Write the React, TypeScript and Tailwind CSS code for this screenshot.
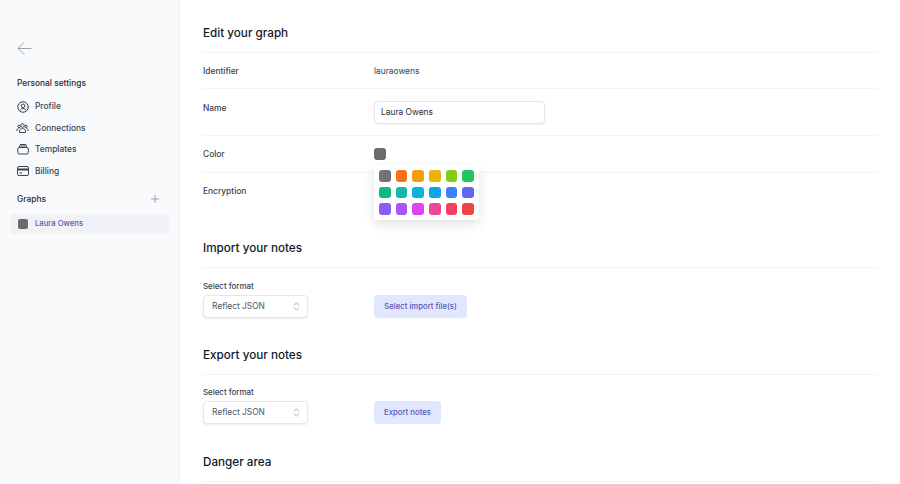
import { ChevronsUpDown } from "lucide-react";

const F = "font-['Inter',sans-serif]";
const colors = [
  "#737373", "#f97316", "#f59e0b", "#eab308", "#84cc16", "#22c55e",
  "#10b981", "#14b8a6", "#06b6d4", "#0ea5e9", "#3b82f6", "#6366f1",
  "#8b5cf6", "#a855f7", "#d946ef", "#ec4899", "#f43f5e", "#ef4444",
];

function ProfileIcon() {
  return (
    <svg width="12" height="12" viewBox="0 0 24 24" fill="none" stroke="#374151" strokeWidth="2">
      <circle cx="12" cy="12" r="10.5" />
      <circle cx="12" cy="9.5" r="3.5" />
      <path d="M6 19c1-3 3.500-4 6-4s5 1 6 4" />
    </svg>
  );
}
function ConnectionsIcon() {
  return (
    <svg width="13" height="12" viewBox="0 0 24 24" fill="none" stroke="#374151" strokeWidth="2" strokeLinejoin="round">
      <circle cx="12" cy="7" r="3.500" />
      <circle cx="5" cy="9" r="2.500" />
      <circle cx="19" cy="9" r="2.500" />
      <path d="M6 21v-3c0-3 3-5 6-5s6 2 6 5v3z" />
      <path d="M1 18v-2c0-1.500 1-3 3-3M23 18v-2c0-1.500-1-3-3-3" />
    </svg>
  );
}
function TemplatesIcon() {
  return (
    <svg width="12" height="12" viewBox="0 0 24 24" fill="none" stroke="#374151" strokeWidth="2" strokeLinejoin="round">
      <rect x="1.500" y="9" width="21" height="13" rx="3" />
      <path d="M4.500 9l2-6h11l2 6" />
      <path d="M7 6h10" />
    </svg>
  );
}
function BillingIcon() {
  return (
    <svg width="12" height="12" viewBox="0 0 24 24" fill="none" stroke="#374151" strokeWidth="2" strokeLinejoin="round">
      <rect x="1" y="3" width="22" height="18" rx="3" />
      <path d="M1 9h22" strokeWidth="4" />
      <path d="M5 16h5" />
    </svg>
  );
}

function NavItem({ icon, label }: { icon: React.ReactNode; label: string }) {
  return (
    <div className="flex h-[21.4px] items-center gap-[6px] pl-[16px] text-[8.400px] font-medium text-[#374151]">
      <span className="flex w-[13px] justify-center">{icon}</span>
      {label}
    </div>
  );
}

function Heading({ children, className }: { children: React.ReactNode; className: string }) {
  return (
    <h2 className={`border-b border-[#f3f4f6] pt-[1px] pb-[9px] text-[11.700px] leading-[20px] font-medium text-[#111827] ${className}`}>
      {children}
    </h2>
  );
}

function FormatRow({ button, width }: { button: string; width: string }) {
  return (
    <div className="flex items-end">
      <div className="w-[171px]">
        <div className="mb-[3px] text-[7.900px] leading-[12px] font-medium text-[#374151]">Select format</div>
        <div className="flex h-[23px] w-[105px] items-center justify-between rounded-[4px] border border-[#e5e7eb] bg-white pr-[5px] pl-[8px] text-[8.400px] text-[#4b5563] shadow-[0_1px_2px_rgba(0,0,0,0.08)]">
          Reflect JSON
          <ChevronsUpDown size={11} strokeWidth={1.300} color="#6b7280" />
        </div>
      </div>
      <div className={`flex h-[23px] items-center justify-center rounded-[4px] bg-[#e0e7ff] text-[7.750px] font-medium text-[#5b55b5] ${width}`}>
        {button}
      </div>
    </div>
  );
}

export default function App() {
  return (
    <div className={`${F} flex h-[484px] w-[900px] overflow-hidden bg-white`}>
      <aside className="h-full w-[180px] shrink-0 border-r border-[#f3f4f6] bg-[#f9fafb] pt-[41px]">
        <svg className="ml-[17px] block" width="15" height="15" viewBox="0 0 15 15" fill="none" stroke="#9ca3af" strokeWidth="1">
          <path d="M14.500 7.500H1M7 1.500L1 7.500l6 6" />
        </svg>
        <div className="mt-[20px] pl-[17px] text-[8.400px] leading-[14px] font-medium text-[#1f2937]">Personal settings</div>
        <div className="mt-[6px]">
          <NavItem icon={<ProfileIcon />} label="Profile" />
          <NavItem icon={<ConnectionsIcon />} label="Connections" />
          <NavItem icon={<TemplatesIcon />} label="Templates" />
          <NavItem icon={<BillingIcon />} label="Billing" />
        </div>
        <div className="mt-[10px] flex items-center justify-between pr-[20px] pl-[17px] text-[8.400px] leading-[14px] font-medium text-[#1f2937]">
          Graphs
          <svg width="8" height="8" viewBox="0 0 8 8" stroke="#9ca3af" strokeWidth="1"><path d="M4 0v8M0 4h8" /></svg>
        </div>
        <div className="mx-[10px] mt-[8px] flex h-[20px] items-center gap-[7px] rounded-[4px] bg-[#f0f2f5] pl-[8px] text-[7.700px] font-medium text-[#5b55b5]">
          <span className="h-[10px] w-[10px] rounded-[2px] bg-[#6b6b6b]" />
          Laura Owens
        </div>
      </aside>
      <main className="min-w-0 flex-1 pt-[22px] pr-[23px] pl-[23px]">
        <Heading className="">Edit your graph</Heading>
        <div className="flex h-[36px] items-center border-b border-[#f3f4f6] pt-[2px] text-[8.400px] text-[#374151]">
          <span className="w-[171px] font-medium">Identifier</span>
          <span>lauraowens</span>
        </div>
        <div className="flex h-[47px] border-b border-[#f3f4f6] pt-[12px] text-[8.400px] text-[#374151]">
          <span className="w-[171px] pt-[1px] leading-[12px] font-medium">Name</span>
          <div className="flex h-[23px] w-[171px] items-center rounded-[4px] border border-[#e5e7eb] bg-white pl-[6px] text-[#1f2937] shadow-[0_1px_2px_rgba(0,0,0,0.06)]">Laura Owens</div>
        </div>
        <div className="relative flex h-[37px] items-center border-b border-[#f3f4f6] text-[8.400px] text-[#374151]">
          <span className="w-[171px] font-medium">Color</span>
          <span className="h-[12px] w-[12px] rounded-[3px] bg-[#6b6b6b]" />
          <div className="absolute top-[29px] left-[171px] z-10 grid grid-cols-6 gap-[5px] rounded-[4px] bg-white p-[5px] shadow-[0_4px_12px_rgba(0,0,0,0.12)]">
            {colors.map((c) => (
              <span key={c} className="h-[11.670px] w-[11.670px] rounded-[3px]" style={{ backgroundColor: c }} />
            ))}
          </div>
        </div>
        <div className="h-[36px] pt-[12px] text-[8.400px] leading-[12px] font-medium text-[#374151]">Encryption</div>
        <Heading className="mt-[28px]">Import your notes</Heading>
        <div className="mt-[12px]">
          <FormatRow button="Select import file(s)" width="w-[93px]" />
        </div>
        <Heading className="mt-[26px]">Export your notes</Heading>
        <div className="mt-[11px]">
          <FormatRow button="Export notes" width="w-[67px]" />
        </div>
        <Heading className="mt-[27px]">Danger area</Heading>
      </main>
    </div>
  );
}
